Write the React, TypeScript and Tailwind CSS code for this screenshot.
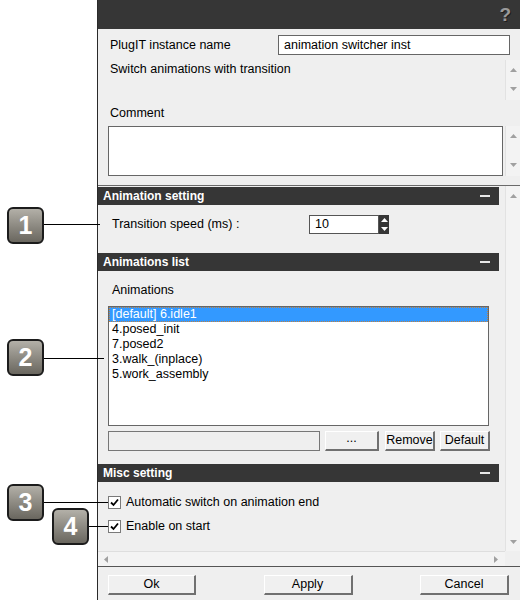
import React from 'react'

const items = ['[default] 6.idle1', '4.posed_init', '7.posed2', '3.walk_(inplace)', '5.work_assembly']

function Arrow({ dir }: { dir: 'up' | 'down' | 'left' | 'right' }) {
  const pts = {
    up: '1,6 4.5,2 8,6',
    down: '1,2 4.5,6 8,2',
    left: '6,1 2,4.5 6,8',
    right: '2,1 6,4.5 2,8',
  }[dir]
  return (
    <svg width="9" height="9" viewBox="0 0 9 9">
      <polygon points={pts} fill="#a0a0a0" />
    </svg>
  )
}

function VScroll({ className = '' }: { className?: string }) {
  return (
    <div className={`w-[15px] shrink-0 bg-[#f3f3f3] border-l border-[#e2e2e2] flex flex-col items-center justify-between py-[6px] ${className}`}>
      <Arrow dir="up" />
      <Arrow dir="down" />
    </div>
  )
}

function Header({ title }: { title: string }) {
  return (
    <div className="h-[18px] bg-[#363636] flex items-center justify-between pl-[5px] pr-[9px]">
      <span className="text-white font-bold text-[12px]">{title}</span>
      <span className="w-[10px] h-[2px] bg-[#e6e6e6]" />
    </div>
  )
}

function Btn({ children, className = '' }: { children: React.ReactNode; className?: string }) {
  return (
    <div className={`h-[20px] flex items-center justify-center bg-[#f0f0f0] border-t border-l border-white border-r-2 border-b-2 border-r-[#707070] border-b-[#707070] ${className}`}>
      {children}
    </div>
  )
}

function Check({ label }: { label: string }) {
  return (
    <div className="flex items-center h-[16px] gap-[5px]">
      <div className="w-[13px] h-[13px] bg-white border border-[#7a7a7a] flex items-center justify-center">
        <svg width="9" height="9" viewBox="0 0 9 9">
          <polyline points="1,4.5 3.5,7 8,1.5" fill="none" stroke="#000" strokeWidth="1.8" />
        </svg>
      </div>
      <span>{label}</span>
    </div>
  )
}

function Callout({ n, className }: { n: string; className: string }) {
  return (
    <div className={`absolute w-[37px] h-[37px] rounded-[6px] border-2 border-[#1c1c1c] bg-gradient-to-b from-[#b3b0a8] to-[#6a675f] flex items-center justify-center ${className}`}>
      <span className="text-white font-bold text-[25px] leading-none">{n}</span>
    </div>
  )
}

export default function App() {
  return (
    <div className="relative flex w-[520px] h-[600px] bg-white font-['Liberation_Sans',Arial,sans-serif] text-[12.5px] text-black">
      <div className="w-[97px] shrink-0 bg-white" />
      <div className="flex flex-col w-[423px] border-l border-[#2a2a2a] bg-[#efefef]">
        {/* title bar */}
        <div className="h-[29px] bg-[#363636] flex items-center justify-end pr-[9px]">
          <span className="text-[#9a9a9a] font-bold text-[19px] leading-none [text-shadow:1px_1px_0_#1e1e1e]">?</span>
        </div>

        {/* instance name */}
        <div className="flex items-center h-[20px] mt-[6px] pl-[12px] pr-[10px]">
          <span className="flex-1">PlugIT instance name</span>
          <div className="w-[232px] h-[20px] border border-[#666] bg-white px-[5px] leading-[18px]">animation switcher inst</div>
        </div>

        {/* description */}
        <div className="flex h-[43px] mt-[2px]">
          <div className="flex-1 pl-[12px] pt-[5px] leading-[14px]">Switch animations with transition</div>
          <VScroll className="mt-[3px]" />
        </div>

        <div className="pl-[12px] mt-[6px] h-[14px] leading-[14px]">Comment</div>

        <div className="flex h-[50px] mt-[6px] pl-[10px]">
          <div className="w-[395px] h-full bg-white border border-[#666]" />
          <div className="flex-1" />
          <VScroll />
        </div>

        <div className="h-[9px]" />

        {/* settings area */}
        <div className="flex flex-col border-t border-[#6a6a6a]">
          <div className="flex h-[365px]">
            <div className="flex-1 pt-[1px] pr-[6px] flex flex-col">
              <Header title="Animation setting" />
              <div className="h-[48px] pt-[10px] pl-[14px] flex">
                <span className="w-[197px] h-[19px] leading-[19px]">Transition speed (ms) :</span>
                <div className="w-[70px] h-[19px] bg-white border border-[#555] px-[5px] leading-[17px]">10</div>
                <div className="w-[10px] h-[19px] bg-[#363636] flex flex-col items-center justify-between py-[3px]">
                  <svg width="7" height="4" viewBox="0 0 7 4"><polygon points="0,4 3.5,0 7,4" fill="#fff" /></svg>
                  <svg width="7" height="4" viewBox="0 0 7 4"><polygon points="0,0 3.5,4 7,0" fill="#fff" /></svg>
                </div>
              </div>

              <Header title="Animations list" />
              <div className="h-[193px] pl-[10px] pt-[12px] flex flex-col">
                <div className="pl-[4px] h-[14px] leading-[14px]">Animations</div>
                <div className="w-[381px] h-[120px] mt-[9px] bg-white border border-[#666]">
                  {items.map((it, i) => (
                    <div
                      key={it}
                      className={`h-[15px] leading-[15px] px-[3px] ${i === 0 ? 'bg-[#3399ff] text-white outline-1 outline-dotted outline-[#c08040] -outline-offset-1' : ''}`}
                    >
                      {it}
                    </div>
                  ))}
                </div>
                <div className="flex mt-[5px] h-[20px]">
                  <div className="w-[212px] h-[20px] bg-[#efefef] border border-[#777]" />
                  <Btn className="w-[54px] ml-[5px] items-end pb-[1px]">...</Btn>
                  <Btn className="w-[50px] ml-[6px]">Remove</Btn>
                  <Btn className="w-[50px] ml-[5px]">Default</Btn>
                </div>
              </div>

              <Header title="Misc setting" />
              <div className="flex-1 pl-[10px] pt-[12px] flex flex-col gap-[8px]">
                <Check label="Automatic switch on animation end" />
                <Check label="Enable on start" />
              </div>
            </div>
            <div className="w-[15px] shrink-0 bg-[#f3f3f3] border-l border-[#e2e2e2] flex flex-col items-center justify-between pt-[6px] pb-[4px]">
              <Arrow dir="up" />
              <Arrow dir="down" />
            </div>
          </div>
          <div className="flex h-[15px]">
            <div className="flex-1 bg-[#f3f3f3] border-t border-[#dedede] flex items-center justify-between pl-[4px] pr-[4px]">
              <Arrow dir="left" />
              <Arrow dir="right" />
            </div>
            <div className="w-[15px] bg-[#efefef]" />
          </div>
        </div>

        {/* footer */}
        <div className="flex-1 border-t border-[#555] flex justify-between pl-[10px] pr-[11px] pt-[8px]">
          <Btn className="w-[88px]">Ok</Btn>
          <Btn className="w-[89px]">Apply</Btn>
          <Btn className="w-[89px]">Cancel</Btn>
        </div>
      </div>

      {/* callouts */}
      <div className="absolute left-[44px] top-[224px] w-[56px] h-px bg-black" />
      <div className="absolute left-[44px] top-[358px] w-[60px] h-px bg-black" />
      <div className="absolute left-[44px] top-[502px] w-[64px] h-px bg-black" />
      <div className="absolute left-[89px] top-[526px] w-[19px] h-px bg-black" />
      <Callout n="1" className="left-[7px] top-[207px]" />
      <Callout n="2" className="left-[7px] top-[339px]" />
      <Callout n="3" className="left-[7px] top-[484px]" />
      <Callout n="4" className="left-[52px] top-[508px]" />
    </div>
  )
}
